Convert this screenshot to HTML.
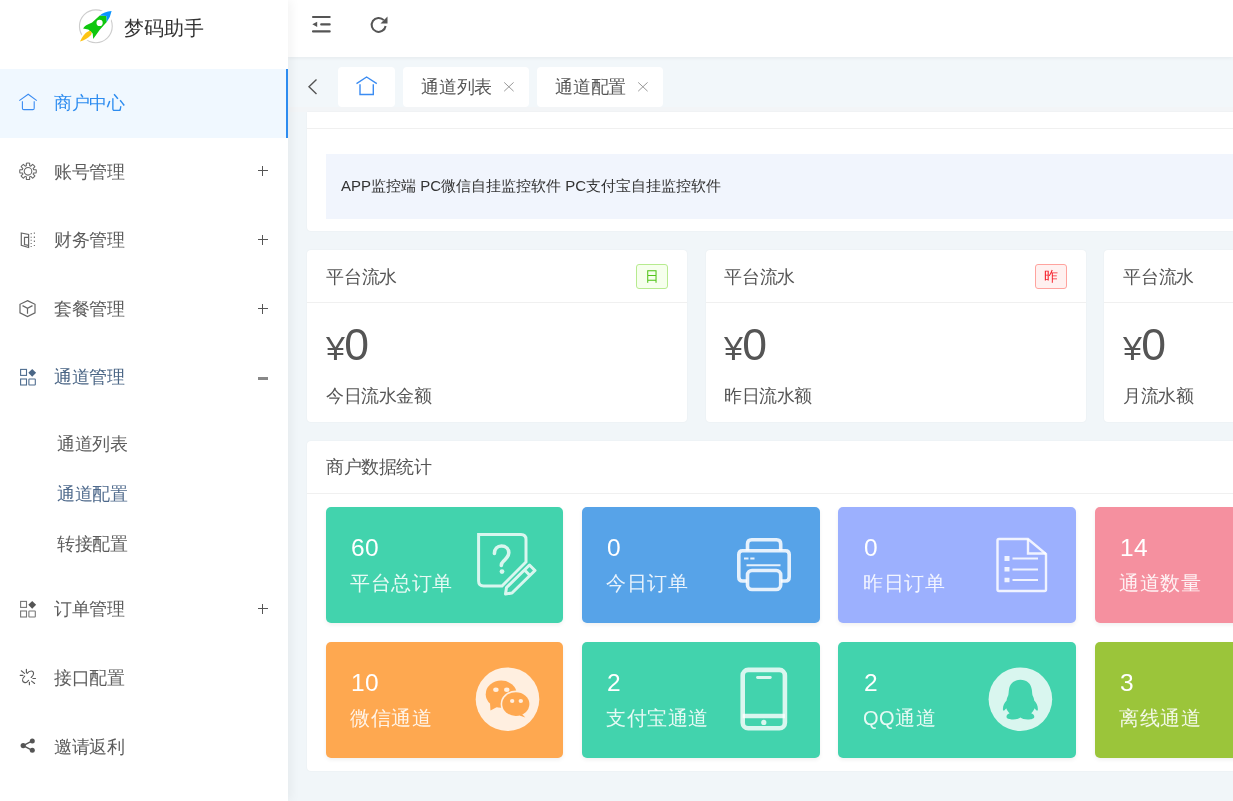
<!DOCTYPE html>
<html><head><meta charset="utf-8">
<style>
html,body{margin:0;padding:0;width:1233px;height:801px;overflow:hidden;background:#f1f6f9;font-family:"Liberation Sans",sans-serif;}
.a{position:absolute;}
.t{position:absolute;white-space:nowrap;line-height:1;will-change:transform;}
#side{position:absolute;left:0;top:0;width:288px;height:801px;background:#fff;box-shadow:3px 0 10px rgba(0,0,0,.05);z-index:3;}
#hdr{position:absolute;left:288px;top:0;width:945px;height:57px;background:#fff;box-shadow:0 1px 4px rgba(0,0,0,.06);z-index:2;}
#tabs{position:absolute;left:288px;top:57px;width:945px;height:50px;background:#f2f7fa;border-bottom:5px solid #f3f5f7;}
.tab{position:absolute;top:67px;height:40px;background:#fff;border-radius:4px;}
.card{position:absolute;background:#fff;border-radius:4px;box-shadow:0 0 2px rgba(0,0,0,.05);}
.menu{color:#5c5c5c;font-size:17.5px;letter-spacing:-.4px;}
.ico{position:absolute;}
.tile{position:absolute;border-radius:5px;box-shadow:0 2px 4px rgba(0,0,0,.06);}
.num{position:absolute;color:#fff;font-size:24.5px;line-height:1;margin-top:-1px;margin-left:.6px;will-change:transform;letter-spacing:.4px;}
.lbl{position:absolute;color:rgba(255,255,255,.87);font-size:20px;line-height:1;white-space:nowrap;will-change:transform;letter-spacing:.5px;}
</style></head><body>

<!-- SIDEBAR -->
<div id="side">
  <!-- logo -->
  <svg class="a" style="left:74px;top:5px" width="44" height="44" viewBox="0 0 44 44">
    <circle cx="21.85" cy="21.3" r="16.4" fill="none" stroke="#cdcdcd" stroke-width="1.1"/>
    <path d="M25.75 10.5 Q30 7 37.6 6.1 Q36.6 12 32.75 17 Z" stroke="#fff" stroke-width="5.5" fill="#fff" stroke-linejoin="round"/>
    <g stroke="#fff" stroke-width="3.2" stroke-linejoin="round" fill="#fff">
      <path d="M25.75 10.5 Q30 7 37.6 6.1 Q36.6 12 32.75 17 L25.8 24.7 L19.2 34.1 L18.7 28.6 L14.3 24.5 L9.1 23.4 L13.2 19.8 L18.1 17.6 Z"/>
      <path d="M6 36.6 C8 32 11 27.5 14.5 26.2 C17.2 25.3 18.6 27.8 16.8 30.2 C14.2 33.3 10 35.3 6 36.6Z"/>
    </g>
    <path d="M25.75 10.5 L32.5 11 L32.75 17 L25.8 24.7 L19.2 34.1 L18.7 28.6 L14.3 24.5 L9.1 23.4 C10.5 21.5 12 20.2 13.2 19.8 L18.1 17.6 Z" fill="#0fc70f"/>
    <path d="M25.75 10.5 Q30 7 37.6 6.1 Q36.6 12 32.75 17 L32.5 11 Z" fill="#0a93ff"/>
    <circle cx="25.6" cy="17.9" r="3.1" fill="#fff"/>
    <path d="M6 36.6 C8 32 11 27.5 14.5 26.2 C17.2 25.3 18.6 27.8 16.8 30.2 C14.2 33.3 10 35.3 6 36.6Z" fill="#fdc414"/>
  </svg>
  <div class="t" style="left:124px;top:18px;font-size:20px;color:#333">梦码助手</div>

  <!-- active item -->
  <div class="a" style="left:0;top:69px;width:288px;height:69px;background:#f0f8ff"></div>
  <div class="a" style="left:286px;top:69px;width:2px;height:69px;background:#2d8cf0"></div>
  <svg class="ico" style="left:18px;top:92px" width="20" height="20" viewBox="0 0 20 20">
    <path d="M1.3 8.6 L10.2 2.3 L18.8 8.6" fill="none" stroke="#3b8cf2" stroke-width="1.1"/>
    <path d="M4.4 9.2 V16.2 Q4.4 17.6 5.8 17.6 H14.8 Q16.2 17.6 16.2 16.2 V9.2" fill="none" stroke="#3b8cf2" stroke-width="1.1"/>
  </svg>
  <div class="t menu" style="left:54px;top:95px;color:#2d8cf0">商户中心</div>

  <!-- 账号管理 gear -->
  <svg class="ico" style="left:18px;top:160.7px" width="20" height="20" viewBox="0 0 20 20">
    <path fill="none" stroke="#666" stroke-width="1.05" stroke-linejoin="round" d="M8.35 4.74 L8.35 2.17 A8.3 8.3 0 0 1 11.65 2.17 L11.65 4.74 A5.8 5.8 0 0 1 12.77 5.20 L14.59 3.38 A8.3 8.3 0 0 1 16.92 5.71 L15.10 7.53 A5.8 5.8 0 0 1 15.56 8.65 L18.13 8.65 A8.3 8.3 0 0 1 18.13 11.95 L15.56 11.95 A5.8 5.8 0 0 1 15.10 13.07 L16.92 14.89 A8.3 8.3 0 0 1 14.59 17.22 L12.77 15.40 A5.8 5.8 0 0 1 11.65 15.86 L11.65 18.43 A8.3 8.3 0 0 1 8.35 18.43 L8.35 15.86 A5.8 5.8 0 0 1 7.23 15.40 L5.41 17.22 A8.3 8.3 0 0 1 3.08 14.89 L4.90 13.07 A5.8 5.8 0 0 1 4.44 11.95 L1.87 11.95 A8.3 8.3 0 0 1 1.87 8.65 L4.44 8.65 A5.8 5.8 0 0 1 4.90 7.53 L3.08 5.71 A8.3 8.3 0 0 1 5.41 3.38 L7.23 5.20 A5.8 5.8 0 0 1 8.35 4.74 Z"/>
    <circle cx="10" cy="10.3" r="3.8" fill="none" stroke="#666" stroke-width="1.05"/>
  </svg>
  <div class="t menu" style="left:54px;top:163.6px">账号管理</div>
  <div class="a" style="left:257.5px;top:170px;width:10.5px;height:1.4px;background:#555"></div>
  <div class="a" style="left:262px;top:166px;width:1.4px;height:10px;background:#555"></div>

  <!-- 财务管理 -->
  <svg class="ico" style="left:18px;top:230px" width="20" height="20" viewBox="0 0 20 20">
    <path d="M3.3 3 L10.6 4.4 V17.5 L3.3 15.4 Z" fill="none" stroke="#666" stroke-width="1.2"/>
    <path d="M10.6 7.4 H6.5 V14.5 L10.6 15.3" fill="none" stroke="#666" stroke-width="1.2"/>
    <path d="M13.2 3 v1.2 M13.2 6.8 v1 M13.2 9.8 v1 M13.2 12.9 v1 M13.2 16 v1 M16.4 2.6 v1.2 M16.4 6.4 v1.6 M16.4 10.5 v1.6 M16.4 14.9 v1.2" fill="none" stroke="#777" stroke-width="1.2"/>
  </svg>
  <div class="t menu" style="left:54px;top:231.6px">财务管理</div>
  <div class="a" style="left:257.5px;top:239px;width:10.5px;height:1.4px;background:#555"></div>
  <div class="a" style="left:262px;top:235px;width:1.4px;height:10px;background:#555"></div>

  <!-- 套餐管理 cube -->
  <svg class="ico" style="left:18px;top:299px" width="20" height="20" viewBox="0 0 20 20">
    <path d="M9.5 1.6 L17 5.3 V13.9 L9.5 17.6 L2 13.9 V5.3 Z" fill="none" stroke="#666" stroke-width="1.2"/>
    <path d="M4.5 6.6 L9.5 9.3 L14.5 6.6 M9.5 9.3 V14.8" fill="none" stroke="#666" stroke-width="1.2"/>
  </svg>
  <div class="t menu" style="left:54px;top:301.4px">套餐管理</div>
  <div class="a" style="left:257.5px;top:308px;width:10.5px;height:1.4px;background:#555"></div>
  <div class="a" style="left:262px;top:304px;width:1.4px;height:10px;background:#555"></div>

  <!-- 通道管理 open -->
  <svg class="ico" style="left:18px;top:367px" width="20" height="20" viewBox="0 0 20 20">
    <rect x="2.6" y="2.4" width="5.9" height="6" fill="none" stroke="#4f6d8f" stroke-width="1.1"/>
    <rect x="2.6" y="12" width="5.9" height="6" fill="none" stroke="#4f6d8f" stroke-width="1.1"/>
    <rect x="10.9" y="12" width="6.4" height="6" rx=".5" fill="none" stroke="#4f6d8f" stroke-width="1.1"/>
    <path d="M14.2 1.9 L18.1 5.8 L14.2 9.7 L10.3 5.8 Z" fill="#4a6686"/>
  </svg>
  <div class="t menu" style="left:54px;top:369px;color:#4a6585">通道管理</div>
  <div class="a" style="left:258px;top:377px;width:10px;height:2.5px;background:#888"></div>

  <div class="t menu" style="left:56.5px;top:435.6px">通道列表</div>
  <div class="t menu" style="left:56.5px;top:485.6px;color:#4f6a8c">通道配置</div>
  <div class="t menu" style="left:56.5px;top:535.6px">转接配置</div>

  <!-- 订单管理 -->
  <svg class="ico" style="left:18px;top:599px" width="20" height="20" viewBox="0 0 20 20">
    <rect x="2.6" y="2.4" width="5.9" height="6" fill="none" stroke="#777" stroke-width="1.1"/>
    <rect x="2.6" y="12" width="5.9" height="6" fill="none" stroke="#777" stroke-width="1.1"/>
    <rect x="10.9" y="12" width="6.4" height="6" rx=".5" fill="none" stroke="#777" stroke-width="1.1"/>
    <path d="M14.2 1.9 L18.1 5.8 L14.2 9.7 L10.3 5.8 Z" fill="#555"/>
  </svg>
  <div class="t menu" style="left:54px;top:601.4px">订单管理</div>
  <div class="a" style="left:257.5px;top:608px;width:10.5px;height:1.4px;background:#555"></div>
  <div class="a" style="left:262px;top:604px;width:1.4px;height:10px;background:#555"></div>

  <!-- 接口配置 broken link -->
  <svg class="ico" style="left:18px;top:667px" width="20" height="20" viewBox="0 0 20 20">
    <g fill="none" stroke="#5a5a5a" stroke-width="1.15" stroke-linecap="round">
    <path d="M9.1 6.4 C10.5 4.5 12 4 13.2 4 C14.8 4 15.8 5.2 15.5 7 C15.3 8.2 14.2 9.5 13.2 10.5"/>
    <path d="M6.7 9.2 C5.4 10.4 4.2 11.8 4.6 13.6 C5 15.5 7.4 16 8.7 15.2 C9.4 14.6 10 14 10.6 13.4"/>
    <path d="M3.3 3.8 L6.5 6.4 M8.4 2.3 V5.7 M2.2 8.3 H5 M14.9 11.5 H17.5 M13.6 14.1 L16.6 16.5 M11.4 15.2 V17.7"/>
    </g>
  </svg>
  <div class="t menu" style="left:54px;top:669.5px">接口配置</div>

  <!-- 邀请返利 share -->
  <svg class="ico" style="left:18px;top:736px" width="20" height="20" viewBox="0 0 20 20">
    <path d="M5.2 9.6 L14.3 4.9 M5.2 9.6 L14.3 14.3" stroke="#555" stroke-width="1.4"/>
    <circle cx="14.3" cy="4.9" r="2.5" fill="#555"/>
    <circle cx="5.2" cy="9.6" r="2.6" fill="#555"/>
    <circle cx="14.3" cy="14.3" r="2.5" fill="#555"/>
  </svg>
  <div class="t menu" style="left:54px;top:738.5px">邀请返利</div>
</div>

<!-- HEADER -->
<div id="hdr">
  <svg class="a" style="left:22px;top:14px" width="22" height="22" viewBox="0 0 22 22">
    <path d="M3 3 H19.7 M11.2 10.4 H19.7 M3 17.4 H19.7" stroke="#555" stroke-width="2.1" stroke-linecap="round"/>
    <path d="M2.3 10.3 L7.2 7.7 V13 Z" fill="#555"/>
  </svg>
  <svg class="a" style="left:81px;top:14px" width="22" height="22" viewBox="0 0 22 22">
    <path d="M16.6 12 A7 7 0 1 1 14.8 6.1" fill="none" stroke="#555" stroke-width="2"/>
    <path d="M18.5 2.5 V9.5 H11.5 Z" fill="#555"/>
  </svg>
</div>

<!-- TABS -->
<div id="tabs"></div>
<svg class="a" style="left:306px;top:77px" width="14" height="20" viewBox="0 0 14 20">
  <path d="M10.5 2.5 L3 9.8 L10.5 17" fill="none" stroke="#555" stroke-width="1.4"/>
</svg>
<div class="tab" style="left:338px;width:57px"></div>
<svg class="a" style="left:355px;top:75px" width="24" height="22" viewBox="0 0 24 22">
  <path d="M1.5 8.6 L11.6 2 L21.8 8.6" fill="none" stroke="#3b8cf2" stroke-width="1.4"/>
  <path d="M5 9.2 V19.5 H18.3 V9.2" fill="none" stroke="#3b8cf2" stroke-width="1.4"/>
</svg>
<div class="tab" style="left:403px;width:126px"></div>
<div class="t" style="left:421px;top:78.5px;font-size:17.5px;letter-spacing:-.2px;color:#555">通道列表</div>
<svg class="a" style="left:502px;top:80px" width="13" height="13" viewBox="0 0 13 13"><path d="M2.2 2.4 L11.6 11.2 M11.6 2.4 L2.2 11.2" stroke="#999" stroke-width="1"/></svg>
<div class="tab" style="left:537px;width:126px"></div>
<div class="t" style="left:555px;top:78.5px;font-size:17.5px;letter-spacing:-.2px;color:#555">通道配置</div>
<svg class="a" style="left:636px;top:80px" width="13" height="13" viewBox="0 0 13 13"><path d="M2.2 2.4 L11.6 11.2 M11.6 2.4 L2.2 11.2" stroke="#999" stroke-width="1"/></svg>

<!-- CONTENT card 1 -->
<div class="card" style="left:307px;top:112px;width:950px;height:119px;border-radius:0 0 4px 4px">
  <div class="a" style="left:0;top:16px;width:100%;height:1px;background:#f0f0f0"></div>
  <div class="a" style="left:19px;top:42px;width:931px;height:65px;background:#f1f5fd"></div>
</div>
<div class="t" style="left:341px;top:178px;font-size:15px;color:#333">APP监控端 PC微信自挂监控软件 PC支付宝自挂监控软件</div>

<!-- stats cards -->
<div class="card" style="left:307px;top:250px;width:380px;height:172px">
  <div class="a" style="left:0;top:52px;width:100%;height:1px;background:#f0f0f0"></div>
</div>
<div class="t" style="left:326px;top:268.5px;font-size:17.5px;letter-spacing:-.2px;color:#555">平台流水</div>
<div class="a" style="left:636px;top:264px;width:30px;height:23px;border:1px solid #b7eb8f;background:#f6ffed;border-radius:3px"></div>
<div class="t" style="left:645px;top:269px;font-size:14px;color:#52c41a">日</div>
<div class="t" style="left:326px;top:322.5px;font-size:44.5px;color:#555"><span style="font-size:34px;letter-spacing:-.6px">¥</span>0</div>
<div class="t" style="left:326px;top:387.5px;font-size:17.5px;letter-spacing:-.5px;color:#555">今日流水金额</div>

<div class="card" style="left:706px;top:250px;width:380px;height:172px">
  <div class="a" style="left:0;top:52px;width:100%;height:1px;background:#f0f0f0"></div>
</div>
<div class="t" style="left:724px;top:268.5px;font-size:17.5px;letter-spacing:-.2px;color:#555">平台流水</div>
<div class="a" style="left:1035px;top:264px;width:30px;height:23px;border:1px solid #ffa39e;background:#fff1f0;border-radius:3px"></div>
<div class="t" style="left:1044px;top:269px;font-size:14px;color:#f5222d">昨</div>
<div class="t" style="left:724px;top:322.5px;font-size:44.5px;color:#555"><span style="font-size:34px;letter-spacing:-.6px">¥</span>0</div>
<div class="t" style="left:724px;top:387.5px;font-size:17.5px;letter-spacing:-.5px;color:#555">昨日流水额</div>

<div class="card" style="left:1104px;top:250px;width:380px;height:172px">
  <div class="a" style="left:0;top:52px;width:100%;height:1px;background:#f0f0f0"></div>
</div>
<div class="t" style="left:1123px;top:268.5px;font-size:17.5px;letter-spacing:-.2px;color:#555">平台流水</div>
<div class="t" style="left:1123px;top:322.5px;font-size:44.5px;color:#555"><span style="font-size:34px;letter-spacing:-.6px">¥</span>0</div>
<div class="t" style="left:1123px;top:387.5px;font-size:17.5px;letter-spacing:-.5px;color:#555">月流水额</div>

<!-- data panel -->
<div class="card" style="left:307px;top:441px;width:950px;height:330px">
  <div class="a" style="left:0;top:52px;width:100%;height:1px;background:#f0f0f0"></div>
</div>
<div class="t" style="left:326px;top:459.4px;font-size:17.5px;letter-spacing:-.5px;color:#555">商户数据统计</div>

<!-- tiles row 1 -->
<div class="tile" style="left:326px;top:507px;width:237px;height:116px;background:#42d3ad"></div>
<div class="num" style="left:350px;top:537px">60</div>
<div class="lbl" style="left:350px;top:573px">平台总订单</div>
<svg class="a" style="left:474px;top:530px" width="66" height="68" viewBox="0 0 66 68">
  <g fill="none" stroke="rgba(255,255,255,.8)" stroke-width="3" stroke-linejoin="round">
    <path d="M4.6 4.5 H47 Q52 4.5 52 9.5 V32 L28 56 H9.6 Q4.6 56 4.6 51 Z" stroke-linejoin="miter"/>
    <path d="M32.5 57.5 L55.5 35 L61 40.5 L38 63 L31.5 64 Z M50.5 40 L56 45.5"/>
  </g>
  <path d="M20.4 23.5 C20.4 19 23.5 16 27.5 16 C31.8 16 34.8 19 34.8 22.8 C34.8 26.5 32 28.5 29.8 30.8 C28.2 32.4 27.3 33.5 27.3 35.5" fill="none" stroke="rgba(255,255,255,.8)" stroke-width="3.6" stroke-linecap="round"/>
  <circle cx="28" cy="41.6" r="2.4" fill="rgba(255,255,255,.8)"/>
</svg>

<div class="tile" style="left:582px;top:507px;width:238px;height:116px;background:#57a3e8"></div>
<div class="num" style="left:606px;top:537px">0</div>
<div class="lbl" style="left:606px;top:573px">今日订单</div>
<svg class="a" style="left:735px;top:536px" width="58" height="57" viewBox="0 0 58 57">
  <g fill="none" stroke="rgba(255,255,255,.85)" stroke-width="3.6">
    <path d="M12.5 14.5 V8 Q12.5 3.8 16.7 3.8 H41.5 Q45.7 3.8 45.7 8 V14.5"/>
    <path d="M12 45 H7.5 Q3.8 45 3.8 41 V18.5 Q3.8 14.7 7.5 14.7 H50.5 Q54.2 14.7 54.2 18.5 V41 Q54.2 45 50.5 45 H46"/>
    <rect x="12.5" y="34.5" width="33.2" height="19" rx="4.5"/>
  </g>
  <path d="M9 22.5 H13.5 M15.3 22.5 H19.5 M11.5 29.3 H45.5" stroke="rgba(255,255,255,.85)" stroke-width="2"/>
</svg>

<div class="tile" style="left:838px;top:507px;width:238px;height:116px;background:#9cb0fe"></div>
<div class="num" style="left:863px;top:537px">0</div>
<div class="lbl" style="left:863px;top:573px">昨日订单</div>
<svg class="a" style="left:994px;top:535px" width="56" height="60" viewBox="0 0 56 60">
  <g fill="none" stroke="rgba(255,255,255,.85)" stroke-width="2.4">
    <path d="M34 4 H5 Q3.5 4 3.5 5.5 V54.5 Q3.5 56 5 56 H50.5 Q52 56 52 54.5 V19 Z"/>
    <path d="M34 4 V18.5 H52"/>
  </g>
  <path d="M18.5 23.5 H44 M18.5 34.5 H44 M18.5 45 H44" stroke="rgba(255,255,255,.85)" stroke-width="2.2"/>
  <path d="M10.5 21 h5 v5 h-5z M10.5 32 h5 v4.6 h-5z M10.5 42.7 h5 v4.6 h-5z" fill="rgba(255,255,255,.85)"/>
</svg>

<div class="tile" style="left:1095px;top:507px;width:238px;height:116px;background:#f5909f"></div>
<div class="num" style="left:1119px;top:537px">14</div>
<div class="lbl" style="left:1119px;top:573px">通道数量</div>

<!-- tiles row 2 -->
<div class="tile" style="left:326px;top:642px;width:237px;height:116px;background:#fea850"></div>
<div class="num" style="left:350px;top:672px">10</div>
<div class="lbl" style="left:350px;top:708px">微信通道</div>
<svg class="a" style="left:475px;top:667px" width="65" height="65" viewBox="0 0 65 65">
  <circle cx="32.5" cy="32.2" r="31.8" fill="#ffefe0"/>
  <g fill="#fea850">
    <ellipse cx="26.2" cy="27.2" rx="15.5" ry="13.6"/>
    <path d="M15 36 L15.5 43.5 L23 39.5 Z"/>
  </g>
  <ellipse cx="40.8" cy="37.1" rx="15.2" ry="13.5" fill="#ffefe0"/>
  <ellipse cx="40.8" cy="37.1" rx="13.6" ry="11.9" fill="#fea850"/>
  <path d="M46.5 46.5 L50.3 50.5 L44.5 48.5 Z" fill="#fea850"/>
  <g fill="#ffefe0">
    <ellipse cx="20.9" cy="22.8" rx="2.7" ry="2.2"/>
    <ellipse cx="31.8" cy="22.8" rx="2.7" ry="2.2"/>
    <ellipse cx="37.2" cy="34" rx="2.2" ry="2"/>
    <ellipse cx="45.8" cy="34" rx="2.2" ry="2"/>
  </g>
</svg>

<div class="tile" style="left:582px;top:642px;width:238px;height:116px;background:#42d3ad"></div>
<div class="num" style="left:606px;top:672px">2</div>
<div class="lbl" style="left:606px;top:708px">支付宝通道</div>
<svg class="a" style="left:738px;top:665px" width="52" height="68" viewBox="0 0 52 68">
  <g fill="none" stroke="rgba(255,255,255,.8)" stroke-width="4.6">
    <rect x="4.7" y="4.9" width="42.2" height="58.4" rx="5.5"/>
    <path d="M4.7 51 H46.9"/>
  </g>
  <path d="M19.5 12.5 H32.3" stroke="rgba(255,255,255,.8)" stroke-width="2.8" stroke-linecap="round"/>
  <circle cx="25.8" cy="57.4" r="2.6" fill="rgba(255,255,255,.8)"/>
</svg>

<div class="tile" style="left:838px;top:642px;width:238px;height:116px;background:#42d3ad"></div>
<div class="num" style="left:863px;top:672px">2</div>
<div class="lbl" style="left:863px;top:708px">QQ通道</div>
<svg class="a" style="left:988px;top:667px" width="65" height="65" viewBox="0 0 65 65">
  <circle cx="32.4" cy="32.2" r="31.8" fill="rgba(255,255,255,.8)"/>
  <path fill="#42d3ad" d="M32.4 12.7 C26 12.7 21.8 16.6 21 22.5 C20.6 25 20.7 27 20.2 28.4 C19.4 30 18.6 32 18.6 33.5 C16.5 35.5 14.9 38.5 14.9 42 C14.9 43.5 15.4 44 16 43.6 C16.8 43.2 17.6 42.2 18.2 41.3 C19 43.3 20.2 45 21.6 46.3 C19.2 47 18.5 48.5 18.5 49.8 C18.5 51.8 21.4 52.5 25 52.5 C28.3 52.5 31 51.6 32.4 50.5 C33.8 51.6 36.5 52.5 39.8 52.5 C43.4 52.5 46.3 51.8 46.3 49.8 C46.3 48.5 45.6 47 43.2 46.3 C44.6 45 45.8 43.3 46.6 41.3 C47.2 42.2 48 43.2 48.8 43.6 C49.4 44 49.9 43.5 49.9 42 C49.9 38.5 48.3 35.5 46.2 33.5 C46.2 32 45.4 30 44.6 28.4 C44.1 27 44.2 25 43.8 22.5 C43 16.6 38.8 12.7 32.4 12.7 Z"/>
</svg>

<div class="tile" style="left:1095px;top:642px;width:238px;height:116px;background:#9bc53a"></div>
<div class="num" style="left:1119px;top:672px">3</div>
<div class="lbl" style="left:1119px;top:708px">离线通道</div>

</body></html>
